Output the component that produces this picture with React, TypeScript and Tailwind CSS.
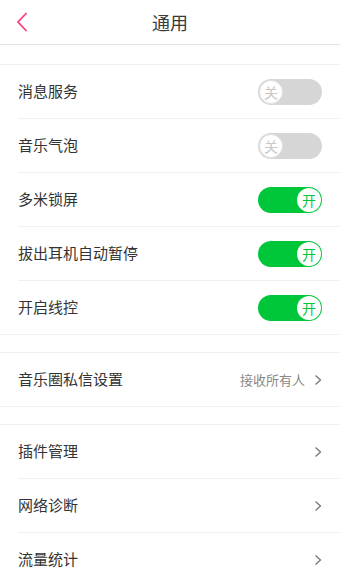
import React from "react";

const font = { fontFamily: '"Noto Sans CJK SC", "Noto Sans", sans-serif' };

function Toggle({ on }: { on: boolean }) {
  return on ? (
    <div className="relative h-[26px] w-[64px] rounded-full bg-[#00c739]">
      <div className="absolute right-[1px] top-[1px] flex h-[24px] w-[24px] items-center justify-center rounded-full bg-white text-[14px] leading-none text-[#00c739]">
        开
      </div>
    </div>
  ) : (
    <div className="relative h-[26px] w-[64px] rounded-full bg-[#d6d6d6]">
      <div className="absolute left-[1px] top-[1px] flex h-[24px] w-[24px] items-center justify-center rounded-full border border-[#e0e0e0] bg-white text-[14px] leading-none text-[#c8c8c8]">
        关
      </div>
    </div>
  );
}

function Chevron() {
  return (
    <svg width="8" height="12" viewBox="0 0 8 12" className="ml-[9px]">
      <path d="M1.5 1.5 L6.5 6 L1.5 10.5" fill="none" stroke="#777" strokeWidth="1.3" />
    </svg>
  );
}

function Row({ label, right, last }: { label: string; right: React.ReactNode; last?: boolean }) {
  return (
    <div className={`flex h-[54px] items-center pl-[18px] ${last ? "border-b border-[#f0f0f0]" : ""}`}>
      <div
        className={`flex h-full flex-1 items-center justify-between pr-[18px] ${
          last ? "" : "border-b border-[#f0f0f0]"
        }`}
      >
        <span className="text-[15px] text-[#333]">{label}</span>
        <div className="flex items-center">{right}</div>
      </div>
    </div>
  );
}

function Gap({ h }: { h: string }) {
  return <div className={`${h} border-b border-[#f0f0f0]`} />;
}

export default function App() {
  return (
    <div className="h-[586px] w-[340px] overflow-hidden bg-white" style={font}>
      <div className="relative flex h-[45px] items-center justify-center border-b border-[#e2e2e2]">
        <svg width="14" height="22" viewBox="0 0 14 22" className="absolute left-[15px] top-[11px]">
          <path d="M11.5 2 L3 11 L11.5 20" fill="none" stroke="#ff3c7e" strokeWidth="1.8" />
        </svg>
        <span className="text-[18px] text-[#3a3a3a]">通用</span>
      </div>
      <Gap h="h-[20px]" />
      <Row label="消息服务" right={<Toggle on={false} />} />
      <Row label="音乐气泡" right={<Toggle on={false} />} />
      <Row label="多米锁屏" right={<Toggle on />} />
      <Row label="拔出耳机自动暂停" right={<Toggle on />} />
      <Row label="开启线控" right={<Toggle on />} last />
      <Gap h="h-[18px]" />
      <Row
        label="音乐圈私信设置"
        right={
          <>
            <span className="text-[13px] text-[#888]">接收所有人</span>
            <Chevron />
          </>
        }
        last
      />
      <Gap h="h-[18px]" />
      <Row label="插件管理" right={<Chevron />} />
      <Row label="网络诊断" right={<Chevron />} />
      <Row label="流量统计" right={<Chevron />} last />
    </div>
  );
}
